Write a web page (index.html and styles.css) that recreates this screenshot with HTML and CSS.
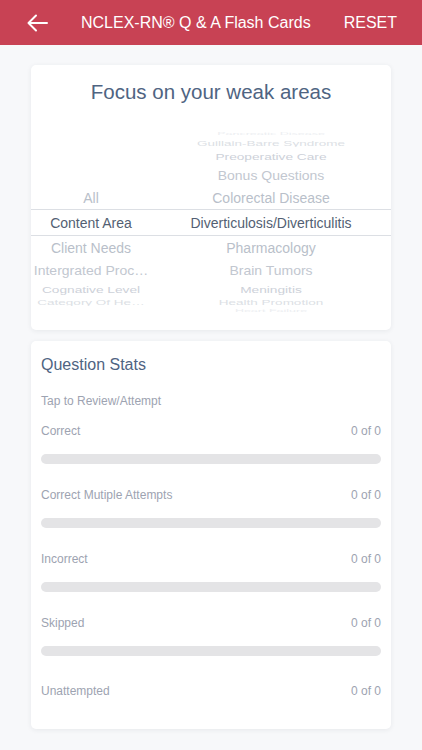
FILE: index.html
```html
<!DOCTYPE html>
<html lang="en">
<head>
    <meta charset="UTF-8">
    <title>NCLEX-RN Q &amp; A Flash Cards</title>
    <link rel="stylesheet" href="styles.css">
</head>
<body>
    <!-- Top bar -->
    <header class="topbar">
        <svg class="back" width="22" height="18" viewBox="0 0 22 18">
            <path d="M21 9 H2.5 M10 1.5 L2.5 9 L10 16.5" fill="none" stroke="#fff" stroke-width="2" stroke-linecap="round" stroke-linejoin="round"/>
        </svg>
        <div class="topbar-title">NCLEX-RN® Q &amp; A Flash Cards</div>
        <div class="topbar-action">RESET</div>
    </header>

    <main class="content">
        <!-- Picker card -->
        <section class="card focus-card">
            <h1 class="focus-title">Focus on your weak areas</h1>
            <div class="picker">
                <div class="prow p5"><span class="pleft"></span><span class="pright">Pancreatic Disease</span></div>
                <div class="prow p4"><span class="pleft"></span><span class="pright">Guillain-Barre Syndrome</span></div>
                <div class="prow p3"><span class="pleft"></span><span class="pright">Preoperative Care</span></div>
                <div class="prow p2"><span class="pleft"></span><span class="pright">Bonus Questions</span></div>
                <div class="prow p1"><span class="pleft">All</span><span class="pright">Colorectal Disease</span></div>
                <div class="prow selected"><span class="pleft">Content Area</span><span class="pright">Diverticulosis/Diverticulitis</span></div>
                <div class="prow p1"><span class="pleft">Client Needs</span><span class="pright">Pharmacology</span></div>
                <div class="prow p2"><span class="pleft">Intergrated Proc…</span><span class="pright">Brain Tumors</span></div>
                <div class="prow p3"><span class="pleft">Cognative Level</span><span class="pright">Meningitis</span></div>
                <div class="prow p4"><span class="pleft">Category Of He…</span><span class="pright">Health Promotion</span></div>
                <div class="prow p5"><span class="pleft"></span><span class="pright">Heart Failure</span></div>
            </div>
        </section>

        <!-- Stats card -->
        <section class="card stats-card">
            <h2 class="stats-title">Question Stats</h2>
            <div class="stats-hint">Tap to Review/Attempt</div>

            <div class="stat">
                <div class="stat-row"><span>Correct</span><span>0 of 0</span></div>
                <div class="bar"></div>
            </div>
            <div class="stat">
                <div class="stat-row"><span>Correct Mutiple Attempts</span><span>0 of 0</span></div>
                <div class="bar"></div>
            </div>
            <div class="stat">
                <div class="stat-row"><span>Incorrect</span><span>0 of 0</span></div>
                <div class="bar"></div>
            </div>
            <div class="stat">
                <div class="stat-row"><span>Skipped</span><span>0 of 0</span></div>
                <div class="bar"></div>
            </div>
            <div class="stat last">
                <div class="stat-row"><span>Unattempted</span><span>0 of 0</span></div>
            </div>
        </section>
    </main>
</body>
</html>
```

FILE: styles.css
```css
body {
    margin: 0;
    background-color: #f7f8fa;
    font-family: "Liberation Sans", Arial, sans-serif;
}
.topbar {
    height: 45px;
    background-color: #c84254;
    color: #fff;
    display: flex;
    align-items: center;
    padding: 0 25px 0 26px;
}
.back {
    display: block;
}
.topbar-title {
    flex: 1;
    text-align: center;
    font-size: 16px;
}
.topbar-action {
    font-size: 16px;
}
.content {
    padding: 20px 31px 21px;
    display: flex;
    flex-direction: column;
    gap: 11px;
}
.card {
    background-color: #fff;
    border-radius: 5px;
    box-shadow: 0 1px 5px rgba(40, 50, 70, 0.08);
}
.focus-card {
    height: 265px;
    padding-top: 15px;
    box-sizing: border-box;
}
.focus-title {
    margin: 0;
    font-weight: normal;
    font-size: 20.5px;
    line-height: 24px;
    text-align: center;
    color: #4f6482;
}
.picker {
    margin-top: 26px;
}
.prow {
    display: flex;
    align-items: center;
    font-size: 14px;
    color: #b9bfca;
    white-space: nowrap;
}
.prow span {
    display: block;
    text-align: center;
}
.pleft {
    width: 120px;
}
.pright {
    flex: 1;
}
.prow.selected {
    height: 27px;
    color: #535f73;
    border-top: 1px solid #dcdfe4;
    border-bottom: 1px solid #dcdfe4;
    box-sizing: border-box;
}
.prow.p1 {
    height: 23px;
}
.prow.p2 {
    height: 22px;
    color: #c2c7d0;
    transform: scaleY(0.9);
}
.prow.p3 {
    height: 16px;
    font-size: 13.7px;
    color: #cdd1d9;
    transform: scaleY(0.72);
}
.prow.p4 {
    height: 10px;
    font-size: 13.5px;
    color: #dcdfe5;
    transform: scaleY(0.5);
}
.prow.p5 {
    height: 8px;
    font-size: 12.5px;
    color: #eceef1;
    transform: scaleY(0.35);
}
.stats-card {
    padding: 12px 10px 28px;
}
.stats-title {
    margin: 0;
    font-weight: normal;
    font-size: 16px;
    line-height: 24px;
    color: #4f6482;
}
.stats-hint {
    margin-top: 14px;
    font-size: 12px;
    line-height: 20px;
    color: #9da3b1;
}
.stat {
    margin-top: 10px;
}
.stat + .stat {
    margin-top: 21px;
}
.stat.last {
    margin-top: 25px;
}
.stat-row {
    display: flex;
    justify-content: space-between;
    font-size: 12px;
    line-height: 20px;
    color: #9da3b1;
}
.bar {
    margin-top: 13px;
    height: 10px;
    border-radius: 5px;
    background-color: #e4e4e6;
}
```
